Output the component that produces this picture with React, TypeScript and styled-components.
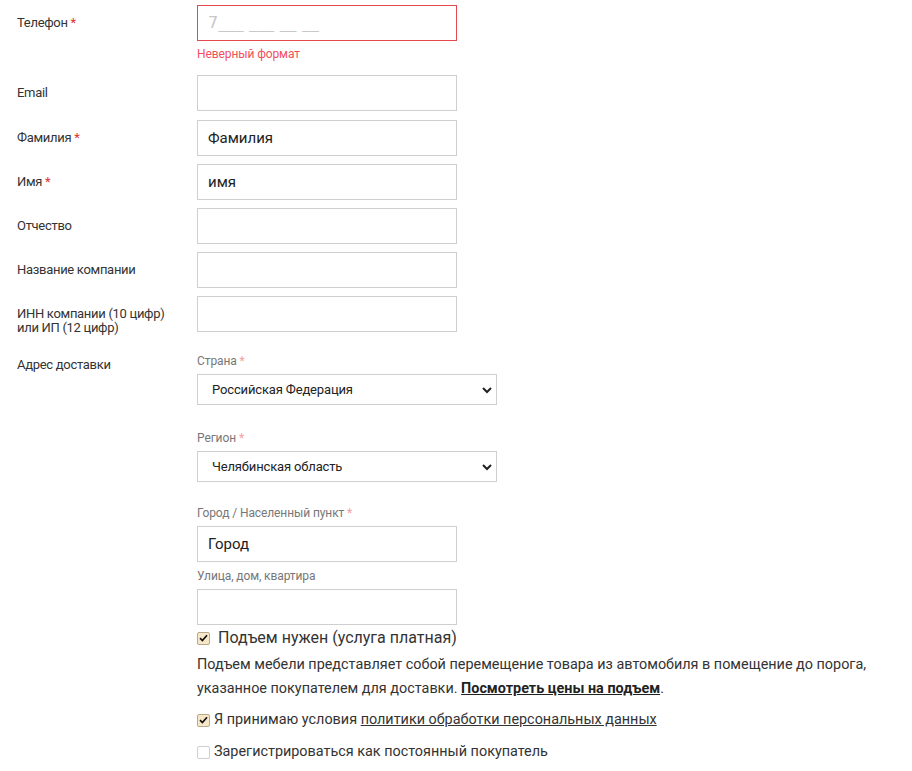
import React from "react";
import styled, { createGlobalStyle } from "styled-components";

const Global = createGlobalStyle`
  html, body { margin: 0; padding: 0; background: #fff; }
  body { font-family: Roboto, "Noto Sans", sans-serif; color: #333; }
  * { box-sizing: border-box; }
`;

const Form = styled.form`
  padding: 5px 0 0 17px;
  width: 912px;
`;

const Row = styled.div<{ $gap?: number }>`
  display: grid;
  grid-template-columns: 180px 1fr;
  margin-bottom: ${(p) => (p.$gap ?? 8)}px;
`;

const Label = styled.div<{ $top?: number }>`
  font-size: 13px;
  line-height: 14px;
  padding-top: ${(p) => p.$top ?? 11}px;
  color: #333;
  letter-spacing: -0.3px;
`;

const Star = styled.span<{ $light?: boolean }>`
  color: ${(p) => (p.$light ? "#f4a0a0" : "#d33")};
`;

const Field = styled.div`
  display: flex;
  flex-direction: column;
`;

const Input = styled.input<{ $error?: boolean }>`
  display: block;
  width: 260px;
  height: 36px;
  margin: 0;
  border: 1px solid ${(p) => (p.$error ? "#e5484d" : "#cfcfcf")};
  padding: 0 10px;
  font-family: Roboto, sans-serif;
  font-size: 15px;
  color: #222;
  outline: none;
  &::placeholder {
    color: #c8c8c8;
    font-family: "DejaVu Sans", sans-serif;
    font-size: 16px;
    letter-spacing: 0.4px;
  }
`;

const ErrorText = styled.div`
  color: #f0505e;
  font-size: 12px;
  line-height: 14px;
  margin: 6px 0 0;
  letter-spacing: -0.1px;
`;

const SubLabel = styled.div<{ $mt?: number }>`
  font-size: 12px;
  line-height: 16px;
  color: #777;
  margin-top: ${(p) => p.$mt ?? 0}px;
  margin-bottom: 5px;
  letter-spacing: -0.1px;
`;

const SelectWrap = styled.div`
  position: relative;
  width: 300px;
  height: 31px;
`;

const Select = styled.select`
  display: block;
  appearance: none;
  margin: 0;
  width: 300px;
  height: 31px;
  border: 1px solid #cfcfcf;
  border-radius: 0;
  background: #fff;
  padding: 0 30px 0 14px;
  font-family: Roboto, sans-serif;
  font-size: 13px;
  color: #222;
  letter-spacing: -0.15px;
  outline: none;
`;

const Chevron = styled.svg`
  position: absolute;
  right: 4px;
  top: 12px;
  pointer-events: none;
`;

const CheckRow = styled.label<{ $big?: boolean; $mt: number }>`
  display: flex;
  align-items: center;
  gap: ${(p) => (p.$big ? 8 : 4)}px;
  font-size: ${(p) => (p.$big ? 16 : 14.4)}px;
  line-height: ${(p) => (p.$big ? 20 : 18)}px;
  color: #333;
  margin-top: ${(p) => p.$mt}px;
`;

const Box = styled.span<{ $checked: boolean }>`
  width: 13px;
  height: 13px;
  border-radius: 2px;
  border: 1px solid ${(p) => (p.$checked ? "#b8a98a" : "#cfcfcf")};
  background: ${(p) => (p.$checked ? "#f6e7c8" : "#fff")};
  display: inline-flex;
  align-items: center;
  justify-content: center;
  flex: none;
`;

const Para = styled.p`
  margin: 5px 0 0;
  font-size: 14.4px;
  line-height: 24px;
  color: #333;
  width: 700px;
`;

const StrongLink = styled.a`
  font-weight: 700;
  color: #222;
  text-decoration: underline;
`;

const Link = styled.a`
  color: #333;
  text-decoration: underline;
`;

const Check = ({ checked }: { checked: boolean }) => (
  <Box $checked={checked}>
    {checked && (
      <svg width="9" height="8" viewBox="0 0 9 8">
        <path d="M1 4.2 L3.4 6.6 L8 1.2" stroke="#111" strokeWidth="1.7" fill="none" />
      </svg>
    )}
  </Box>
);

const SelectBox = ({ value }: { value: string }) => (
  <SelectWrap>
    <Select defaultValue={value}>
      <option>{value}</option>
    </Select>
    <Chevron width="12" height="8" viewBox="0 0 12 8">
      <path d="M2 2 L6 6 L10 2" stroke="#222" strokeWidth="2" fill="none" />
    </Chevron>
  </SelectWrap>
);

export default function App() {
  return (
    <>
      <Global />
      <Form>
        <Row $gap={14}>
          <Label>
            Телефон <Star>*</Star>
          </Label>
          <Field>
            <Input $error placeholder="7___ ___ __ __" />
            <ErrorText>Неверный формат</ErrorText>
          </Field>
        </Row>
        <Row $gap={9}>
          <Label>Email</Label>
          <Field>
            <Input />
          </Field>
        </Row>
        <Row>
          <Label>
            Фамилия <Star>*</Star>
          </Label>
          <Field>
            <Input defaultValue="Фамилия" />
          </Field>
        </Row>
        <Row>
          <Label>
            Имя <Star>*</Star>
          </Label>
          <Field>
            <Input defaultValue="имя" />
          </Field>
        </Row>
        <Row>
          <Label>Отчество</Label>
          <Field>
            <Input />
          </Field>
        </Row>
        <Row>
          <Label>Название компании</Label>
          <Field>
            <Input />
          </Field>
        </Row>
        <Row $gap={5}>
          <Label>
            ИНН компании (10 цифр)
            <br />
            или ИП (12 цифр)
          </Label>
          <Field>
            <Input />
          </Field>
        </Row>
        <Row>
          <Label $top={18}>Адрес доставки</Label>
          <Field>
            <SubLabel $mt={13}>
              Страна <Star $light>*</Star>
            </SubLabel>
            <SelectBox value="Российская Федерация" />
            <SubLabel $mt={25}>
              Регион <Star $light>*</Star>
            </SubLabel>
            <SelectBox value="Челябинская область" />
            <SubLabel $mt={23}>
              Город / Населенный пункт <Star $light>*</Star>
            </SubLabel>
            <Input defaultValue="Город" />
            <SubLabel $mt={6}>Улица, дом, квартира</SubLabel>
            <Input />
            <CheckRow $big $mt={3}>
              <Check checked />
              Подъем нужен (услуга платная)
            </CheckRow>
            <Para>
              Подъем мебели представляет собой перемещение товара из автомобиля в помещение до порога,
              <br />
              указанное покупателем для доставки. <StrongLink href="#">Посмотреть цены на подъем</StrongLink>.
            </Para>
            <CheckRow $mt={10}>
              <Check checked />
              <span>
                Я принимаю условия <Link href="#">политики обработки персональных данных</Link>
              </span>
            </CheckRow>
            <CheckRow $mt={14}>
              <Check checked={false} />
              Зарегистрироваться как постоянный покупатель
            </CheckRow>
          </Field>
        </Row>
      </Form>
    </>
  );
}
